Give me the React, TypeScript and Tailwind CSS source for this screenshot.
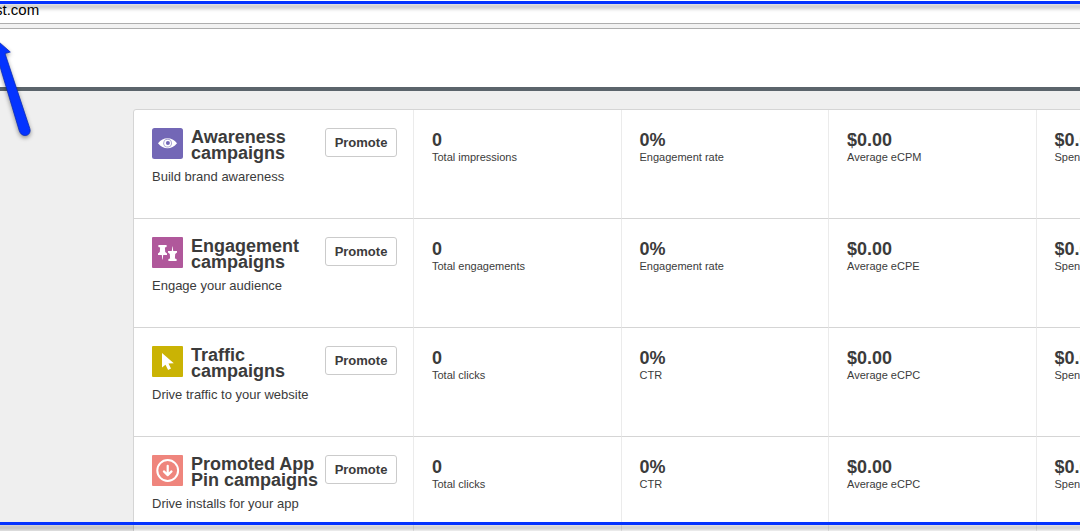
import React from "react";

type Metric = { value: string; label: string };
type Campaign = {
  title: [string, string];
  description: string;
  icon: React.ReactNode;
  metrics: Metric[];
};

function EyeIcon() {
  return (
    <svg viewBox="0 0 31 31" className="size-[31px] shrink-0" aria-hidden="true">
      <rect width="31" height="31" rx="2.5" fill="#7367b6" />
      <path d="M6 15.3C8.6 11.8 12 10.3 15.5 10.3S22.4 11.8 25 15.3C22.4 18.8 19 20.3 15.5 20.3S8.6 18.8 6 15.3Z" fill="#fff" />
      <circle cx="15.6" cy="15.2" r="4.4" fill="#7367b6" fillOpacity="0.6" />
      <circle cx="15.6" cy="15.2" r="3.4" fill="#fff" />
      <circle cx="15.9" cy="15" r="2" fill="#7367b6" />
    </svg>
  );
}

function PinsIcon() {
  const pin = "M0.4 0H8.6V2L6.9 2.6L7.2 7L9 8.4V10H5.2L4.7 14.5H4.3L3.8 10H0V8.4L1.8 7L2.1 2.6L0.4 2Z";
  return (
    <svg viewBox="0 0 31 31" className="size-[31px] shrink-0" aria-hidden="true">
      <rect width="31" height="31" rx="1" fill="#b0589b" />
      <path d={pin} transform="translate(6 8)" fill="#fff" />
      <path d={pin} transform="translate(25 24) rotate(180)" fill="#fff" />
    </svg>
  );
}

function CursorIcon() {
  return (
    <svg viewBox="0 0 31 31" className="size-[31px] shrink-0" aria-hidden="true">
      <rect width="31" height="31" rx="1" fill="#cab304" />
      <path d="M10 7V21.6L13.5 18.7L16.1 24L19 22.6L16.5 17.6L21.8 17.3Z" fill="#fff" />
    </svg>
  );
}

function DownloadIcon() {
  return (
    <svg viewBox="0 0 31 31" className="size-[31px] shrink-0" aria-hidden="true">
      <rect width="31" height="31" rx="1" fill="#ef857d" />
      <g fill="none" stroke="#fff" strokeLinecap="round" strokeLinejoin="round">
        <circle cx="15.7" cy="15.5" r="10.4" strokeWidth="2" />
        <path d="M15.7 10.8V20M11.9 16.4L15.7 20.1L19.5 16.4" strokeWidth="2.2" />
      </g>
    </svg>
  );
}

const spend: Metric = { value: "$0.00", label: "Spend" };

const campaigns: Campaign[] = [
  {
    title: ["Awareness", "campaigns"],
    description: "Build brand awareness",
    icon: <EyeIcon />,
    metrics: [
      { value: "0", label: "Total impressions" },
      { value: "0%", label: "Engagement rate" },
      { value: "$0.00", label: "Average eCPM" },
      spend,
    ],
  },
  {
    title: ["Engagement", "campaigns"],
    description: "Engage your audience",
    icon: <PinsIcon />,
    metrics: [
      { value: "0", label: "Total engagements" },
      { value: "0%", label: "Engagement rate" },
      { value: "$0.00", label: "Average eCPE" },
      spend,
    ],
  },
  {
    title: ["Traffic", "campaigns"],
    description: "Drive traffic to your website",
    icon: <CursorIcon />,
    metrics: [
      { value: "0", label: "Total clicks" },
      { value: "0%", label: "CTR" },
      { value: "$0.00", label: "Average eCPC" },
      spend,
    ],
  },
  {
    title: ["Promoted App", "Pin campaigns"],
    description: "Drive installs for your app",
    icon: <DownloadIcon />,
    metrics: [
      { value: "0", label: "Total clicks" },
      { value: "0%", label: "CTR" },
      { value: "$0.00", label: "Average eCPC" },
      spend,
    ],
  },
];

function CampaignRow({ campaign }: { campaign: Campaign }) {
  return (
    <tr className="h-[109px] align-top">
      <th
        scope="row"
        className="border-r border-b border-r-[#ebebeb] border-b-[#d5d5d5] pt-[18px] pr-4 pl-[18px] text-left font-normal"
      >
        <div className="flex items-start">
          {campaign.icon}
          <h2 className="ml-2 pt-px text-[18px] leading-4 font-bold whitespace-nowrap">
            {campaign.title[0]}
            <br />
            {campaign.title[1]}
          </h2>
          <button
            type="button"
            className="ml-auto h-[29px] w-[72px] shrink-0 rounded-[3px] border border-[#cbcbcb] bg-white text-[13px] font-bold"
          >
            Promote
          </button>
        </div>
        <p className="mt-1.5 text-[13px] leading-5 whitespace-nowrap">{campaign.description}</p>
      </th>
      {campaign.metrics.map((metric) => (
        <td key={metric.label} className="border-r border-b border-r-[#ebebeb] border-b-[#d5d5d5] px-[18px] pt-5">
          <div className="text-[18px] leading-5 font-bold">{metric.value}</div>
          <div className="text-[11px] leading-[14px] whitespace-nowrap">{metric.label}</div>
        </td>
      ))}
    </tr>
  );
}

export default function App() {
  return (
    <div className="relative h-screen overflow-hidden bg-[#efefef] font-['Liberation_Sans',sans-serif] text-[#3b3b3b]">
      <div className="h-6 overflow-hidden border-b border-[#aeaeae] bg-white">
        <input
          type="text"
          aria-label="Address"
          defaultValue="st.com"
          className="block h-5 w-full bg-transparent indent-[-5px] text-[15px] text-black outline-none"
        />
      </div>
      <div className="h-[5px] border-b border-[#aeaeae] bg-[#f2f2f2]" />
      <header className="h-[62px] border-b-4 border-[#5b646b] bg-white" />
      <main className="pt-[18px] pl-[133px]">
        <div className="w-full min-w-[1112px] rounded-[3px] border border-[#d5d5d5] bg-white">
          <table className="w-full table-fixed border-separate border-spacing-0" aria-label="Campaigns">
            <colgroup>
              <col className="w-[280px]" />
              <col />
              <col />
              <col />
              <col />
            </colgroup>
            <tbody>
              {campaigns.map((campaign) => (
                <CampaignRow key={campaign.description} campaign={campaign} />
              ))}
            </tbody>
          </table>
        </div>
      </main>

      <div className="pointer-events-none absolute -inset-x-3 top-px h-[3px] bg-[#0433ff] shadow-[0_4px_4px_rgba(0,0,0,0.35)]" />
      <div className="pointer-events-none absolute -inset-x-3 bottom-[6px] h-[3px] bg-[#0433ff] shadow-[0_4px_4px_rgba(0,0,0,0.35)]" />
      <svg
        viewBox="0 0 50 110"
        className="pointer-events-none absolute top-[35px] left-0 h-[110px] w-[50px] drop-shadow-[0_2px_2px_rgba(0,0,0,0.4)]"
        aria-hidden="true"
      >
        <path
          d="M-1 7L10.3 17L5 18.5L29.8 93.5C31 97.3 28.7 100.5 25.2 100.5C22 100.5 20.2 98.5 19.2 95.5L-1 28Z"
          fill="#0433ff"
          stroke="#0a2bb8"
          strokeWidth="0.8"
        />
      </svg>
    </div>
  );
}
